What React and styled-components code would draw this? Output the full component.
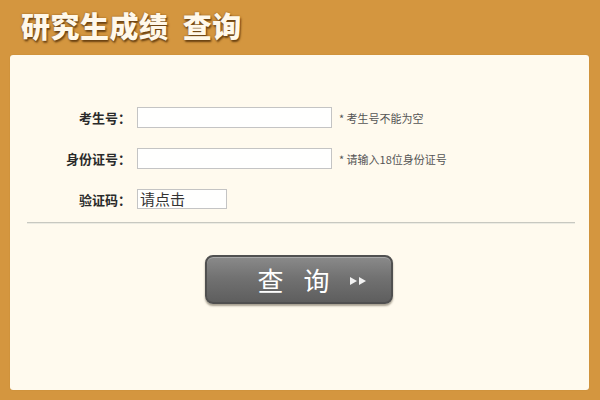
import React from 'react';
import styled, { createGlobalStyle } from 'styled-components';

const GlobalStyle = createGlobalStyle`
  html, body {
    margin: 0;
    padding: 0;
    background: #d4963f;
    font-family: "Noto Sans CJK SC", "Noto Sans", sans-serif;
  }
`;

const Page = styled.div`
  width: 600px;
  height: 400px;
  background: #d4963f;
  display: flex;
  flex-direction: column;
  overflow: hidden;
`;

const Header = styled.div`
  height: 55px;
  display: flex;
  align-items: center;
  padding-left: 21px;
  padding-bottom: 5px;
  box-sizing: border-box;
`;

const Title = styled.h1`
  margin: 0;
  font-size: 29px;
  font-weight: 900;
  color: #fff8ea;
  letter-spacing: 0.5px;
  text-shadow: 1px 2px 2px #6a4212, 0 0 2px #8a5a20;
  white-space: pre;
`;

const Panel = styled.div`
  margin: 0 11px 0 10px;
  height: 335px;
  background: #fffaee;
  border-radius: 3px;
  box-shadow: 0 0 1px #b07a30;
  display: flex;
  flex-direction: column;
  padding-top: 52px;
  box-sizing: border-box;
`;

const Form = styled.div`
  display: grid;
  grid-template-columns: 121px auto 1fr;
  column-gap: 6px;
  row-gap: 20px;
  align-items: center;
`;

const Label = styled.label`
  justify-self: end;
  font-size: 13px;
  font-weight: bold;
  color: #2a2a2a;
  white-space: nowrap;
`;

const Input = styled.div`
  width: ${p => p.$w}px;
  height: ${p => p.$h}px;
  box-sizing: border-box;
  border: 1px solid #c4c4c4;
  background: #fffffe;
  font-size: 15px;
  line-height: ${p => p.$h - 2}px;
  color: #333;
  padding-left: 2px;
`;

const Hint = styled.span`
  font-size: 11px;
  color: #555;
  white-space: nowrap;
  padding-left: 1px;
`;

const Divider = styled.div`
  height: 1px;
  background: #c8c8c0;
  margin: 13px 14px 0 17px;
  box-shadow: 0 1px 0 #ecebe2;
`;

const ButtonRow = styled.div`
  display: flex;
  justify-content: center;
  padding-top: 32px;
  padding-right: 2px;
`;

const QueryButton = styled.button`
  width: 188px;
  height: 49px;
  border-radius: 8px;
  border: 2px solid #505050;
  background: linear-gradient(#8a8a8a 0%, #727272 45%, #5e5e5e 100%);
  box-shadow: inset 0 1px 0 #a8a8a8, 0 2px 2px rgba(60, 50, 30, 0.45);
  display: flex;
  align-items: center;
  justify-content: center;
  padding: 0 0 0 28px;
  color: #fff;
  font-family: "Noto Sans CJK SC", sans-serif;
  font-size: 26px;
  cursor: pointer;
`;

const Word = styled.span`
  margin-right: ${p => p.$gap}px;
  line-height: 1;
`;

const Arrows = styled.svg`
  margin-top: 2px;
`;

export default function App() {
  return (
    <Page>
      <GlobalStyle />
      <Header>
        <Title>研究生成绩  查询</Title>
      </Header>
      <Panel>
        <Form>
          <Label>考生号：</Label>
          <Input $w={195} $h={21} />
          <Hint>* 考生号不能为空</Hint>

          <Label>身份证号：</Label>
          <Input $w={195} $h={21} />
          <Hint>* 请输入18位身份证号</Hint>

          <Label>验证码：</Label>
          <Input $w={90} $h={20}>请点击</Input>
          <span />
        </Form>
        <Divider />
        <ButtonRow>
          <QueryButton>
            <Word $gap={20}>查</Word>
            <Word $gap={18}>询</Word>
            <Arrows width="20" height="12" viewBox="0 0 20 12">
              <path d="M2 2 L9 6 L2 10 Z" fill="#f2f2f2" />
              <path d="M11 2 L18 6 L11 10 Z" fill="#f2f2f2" />
            </Arrows>
          </QueryButton>
        </ButtonRow>
      </Panel>
    </Page>
  );
}
